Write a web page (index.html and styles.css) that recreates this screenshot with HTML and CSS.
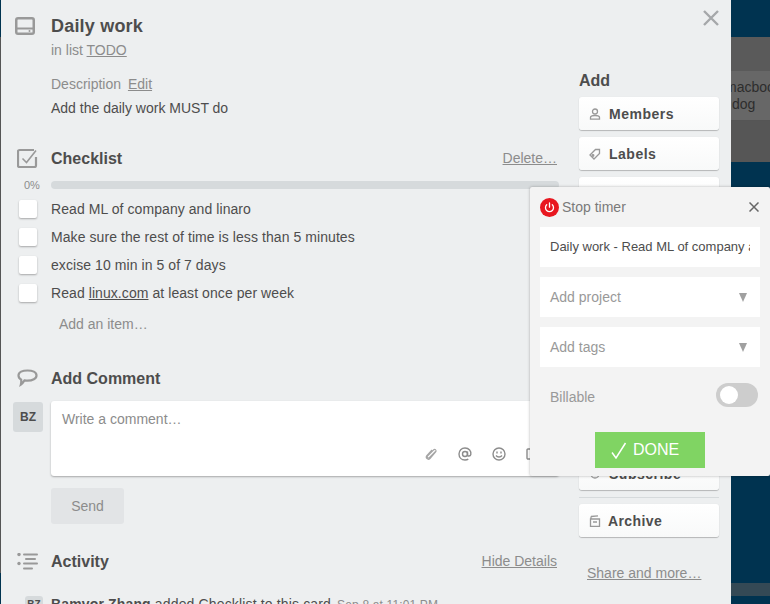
FILE: index.html
```html
<!DOCTYPE html>
<html lang="en">
<head>
  <meta charset="UTF-8" />
  <title>Daily work</title>
  <link rel="stylesheet" href="styles.css">
</head>
<body>
  <div class="page">
    <div class="edge"></div>

    <div class="modal">
      <svg class="close" width="18" height="18" viewBox="0 0 18 18"><path d="M2 2l14 14M16 2L2 16" /></svg>

      <div class="main">
        <div class="head-row">
          <svg class="head-icon title-icon" width="20" height="18" viewBox="0 0 20 18"><path fill="#999" d="M3 0h14a3 3 0 0 1 3 3v12a3 3 0 0 1-3 3H3a3 3 0 0 1-3-3V3a3 3 0 0 1 3-3zm0 2.500a.5.5 0 0 0-.5.500v7.500h15V3a.5.5 0 0 0-.5-.5zM2.500 12.500V15a.5.5 0 0 0 .5.500h14a.5.5 0 0 0 .5-.5v-2.500z"/><circle fill="#999" cx="14.500" cy="14" r="1"/></svg>
          <h1>Daily work</h1>
        </div>
        <div class="body-col">
          <p class="sub">in list <a href="#">TODO</a></p>
          <p class="desc-label">Description <a href="#">Edit</a></p>
          <p class="desc">Add the daily work MUST do</p>
        </div>

        <div class="head-row checklist-head">
          <svg class="head-icon" width="21" height="20" viewBox="0 0 21 20"><path fill="none" stroke="#999" stroke-width="2.200" d="M19 9v8.500a1.500 1.500 0 0 1-1.500 1.500h-15A1.500 1.500 0 0 1 1 17.500v-14A1.500 1.500 0 0 1 2.500 2H17"/><path fill="none" stroke="#999" stroke-width="1.600" d="M5.500 10.500l4 4L19 2.500"/></svg>
          <h2>Checklist</h2>
          <a class="side-link" href="#">Delete…</a>
        </div>
        <div class="progress">
          <span class="percent">0%</span>
          <div class="bar"></div>
        </div>
        <div class="items">
          <div class="item"><span class="box"></span><span>Read ML of company and linaro</span></div>
          <div class="item"><span class="box"></span><span>Make sure the rest of time is less than 5 minutes</span></div>
          <div class="item"><span class="box"></span><span>excise 10 min in 5 of 7 days</span></div>
          <div class="item"><span class="box"></span><span>Read <a href="#">linux.com</a> at least once per week</span></div>
        </div>
        <p class="add-item">Add an item…</p>

        <div class="head-row comment-head">
          <svg class="head-icon" width="21" height="18" viewBox="0 0 21 18"><path fill="none" stroke="#999" stroke-width="2.200" d="M10.500 1.500c5 0 9 1.900 9 5s-4 5.200-9 5.200c-1 0-2-.1-3-.3-.8 1.300-2 3.100-3.600 4.100.4-1.500.5-3 .3-4.800C2.700 9.800 1.500 8.300 1.500 6.500c0-3.100 4-5 9-5z"/></svg>
          <h2>Add Comment</h2>
        </div>
        <div class="comment-row">
          <div class="avatar">BZ</div>
          <div class="comment-box">
            <p class="placeholder">Write a comment…</p>
            <div class="comment-tools">
              <svg class="clip" width="16" height="16" viewBox="0 0 16 16"><path d="M12.500 5.500L6.500 11.500c-1 1-3 .2-2-1.500L10.500 4c1.500-1.500 3.500.5 2.200 2L7 12.500c-2 2-5-.5-3.200-3L9 4"/></svg>
              <svg width="16" height="16" viewBox="0 0 16 16"><circle cx="8" cy="8" r="2.500"/><path d="M10.500 5.500v3.500c0 1.500 2.800 1.500 3.300-.5C14.400 5 12 2 8 2 4.500 2 2 4.500 2 8s2.500 6 6 6c1.400 0 2.400-.3 3.300-.9"/></svg>
              <svg width="16" height="16" viewBox="0 0 16 16"><circle cx="8" cy="8" r="6"/><path d="M5 9.500c1.500 2 4.500 2 6 0"/><path d="M6 5.500v2M10 5.500v2"/></svg>
              <svg width="16" height="16" viewBox="0 0 16 16"><rect x="2" y="3" width="12" height="10" rx="1"/></svg>
            </div>
          </div>
        </div>
        <div class="body-col">
          <button class="send" type="button">Send</button>
        </div>

        <div class="head-row activity-head">
          <svg class="head-icon" width="21" height="17" viewBox="0 0 21 17"><g fill="#999"><circle cx="2" cy="1.500" r="1.700"/><circle cx="2" cy="10.500" r="1.700"/><rect x="6" y=".5" width="15" height="2" rx="1"/><rect x="8" y="5" width="11" height="2" rx="1"/><rect x="6" y="9.500" width="15" height="2" rx="1"/><rect x="6" y="14.500" width="10" height="2" rx="1"/></g></svg>
          <h2>Activity</h2>
          <a class="side-link" href="#">Hide Details</a>
        </div>
        <div class="activity-row">
          <div class="avatar small">BZ</div>
          <p><strong>Bamvor Zhang</strong> added Checklist to this card <span class="date">Sep 8 at 11:01 PM</span></p>
        </div>
      </div>

      <div class="sidebar">
        <h3>Add</h3>
        <div class="btn"><svg width="12" height="12" viewBox="0 0 12 12"><circle cx="6" cy="3.500" r="2.500"/><path d="M1.500 11.200V9.500c0-1.500 2-2 4.500-2s4.500.5 4.500 2v1.700z"/></svg>Members</div>
        <div class="btn"><svg width="12" height="12" viewBox="0 0 12 12"><path d="M1 7l5.500-5.500h4v4L5 11z"/><circle cx="4" cy="7.500" r=".8"/></svg>Labels</div>
        <div class="btn">Checklist</div>
        <div class="btn">Due Date</div>
        <div class="btn">Attachment</div>
        <h3 class="actions">Actions</h3>
        <div class="btn">Move</div>
        <div class="btn">Copy</div>
        <div class="btn"><svg width="12" height="12" viewBox="0 0 12 12"><circle cx="6" cy="6" r="4"/></svg>Subscribe</div>
        <hr />
        <div class="btn archive"><svg width="12" height="12" viewBox="0 0 12 12"><path d="M2 1.500L9 .8M2 1.500V4M1.500 4h9v7.500h-9zM4 7h4"/></svg>Archive</div>
        <a class="share" href="#">Share and more…</a>
      </div>
    </div>

    <div class="board">
      <div class="board-top"></div>
      <div class="list-head"></div>
      <div class="list-card">
        <span class="line-one">macbook</span>
        <span>dog</span>
      </div>
      <div class="list-foot"></div>
      <div class="board-gap"></div>
      <div class="scroll"></div>
    </div>

    <div class="timer">
      <div class="timer-head">
        <svg class="power" width="19" height="19" viewBox="0 0 19 19"><circle cx="9.500" cy="9.500" r="9.500" fill="#e8171f"/><path fill="none" stroke="#fff" stroke-width="1.300" stroke-linecap="round" d="M6.700 6.800a4 4 0 1 0 5.600 0M9.500 5v4.200"/></svg>
        <span class="timer-title">Stop timer</span>
        <svg class="timer-close" width="10" height="10" viewBox="0 0 10 10"><path d="M.5.5l9 9M9.500.5l-9 9"/></svg>
      </div>
      <div class="field task"><span>Daily work - Read ML of company and linaro</span></div>
      <div class="field"><span>Add project</span><i class="arrow"></i></div>
      <div class="field"><span>Add tags</span><i class="arrow"></i></div>
      <div class="billable">
        <span>Billable</span>
        <div class="toggle"><div class="knob"></div></div>
      </div>
      <div class="done">
        <svg class="tick" width="16" height="17" viewBox="0 0 16 17"><path d="M1 10.500l4 5.500L14.500 1"/></svg>
        DONE
      </div>
    </div>
  </div>
</body>
</html>
```

FILE: styles.css
```css
body {
  margin: 0;
  font-family: "Liberation Sans", Arial, sans-serif;
  font-size: 14px;
  line-height: 20px;
  color: #4d4d4d;
}
p, h1, h2, h3 {
  margin: 0;
}
a {
  color: inherit;
}
.page {
  position: relative;
  display: flex;
  width: 770px;
  height: 604px;
  overflow: hidden;
  background-color: #003350;
}
.edge {
  width: 1px;
  background: linear-gradient(#003350 37px, #555 37px, #555 573px, #003350 573px);
}

/* card modal */
.modal {
  position: relative;
  display: flex;
  gap: 20px;
  width: 718px;
  height: 590px;
  padding: 14px 12px 0 0;
  background-color: #edeff0;
  overflow: hidden;
}
.close {
  position: absolute;
  top: 9px;
  right: 11px;
  fill: none;
  stroke: #a5a8aa;
  stroke-width: 2.400;
}
.main {
  width: 558px;
  flex-shrink: 0;
  padding-left: 13px;
  box-sizing: border-box;
}
.head-row {
  display: flex;
  align-items: center;
  height: 24px;
}
.head-icon {
  flex-shrink: 0;
  margin: 0 13px 0 3px;
}
.title-icon {
  margin: 0 16px 0 1px;
}
.head-row h1, .head-row h2 {
  flex: 1;
}
h1 {
  font-size: 18px;
  line-height: 24px;
  letter-spacing: .2px;
}
h2 {
  margin-top: 2px;
  font-size: 16px;
  line-height: 24px;
}
.body-col {
  padding-left: 37px;
}
.sub {
  margin-top: 2px;
  color: #8c8c8c;
}
.desc-label {
  margin-top: 14px;
  color: #8c8c8c;
}
.desc-label a {
  margin-left: 3px;
}
.desc {
  margin-top: 4px;
}
.checklist-head {
  margin-top: 28px;
}
.side-link {
  margin-right: 2px;
  color: #8c8c8c;
}
.progress {
  display: flex;
  align-items: center;
  margin-top: 11px;
  height: 8px;
}
.percent {
  width: 37px;
  padding-left: 10px;
  box-sizing: border-box;
  font-size: 11px;
  color: #8c8c8c;
}
.bar {
  flex: 1;
  height: 8px;
  border-radius: 4px;
  background-color: #d6dadc;
}
.items {
  margin-top: 6px;
}
.item {
  display: flex;
  align-items: center;
  height: 28px;
  letter-spacing: .07px;
}
.box {
  width: 18px;
  height: 18px;
  margin: 0 14px 0 5px;
  border-radius: 2px;
  background-color: #fff;
  box-shadow: 0 1px 2px rgba(0, 0, 0, .3);
}
.add-item {
  margin-top: 7px;
  padding-left: 45px;
  color: #8c8c8c;
}
.comment-head {
  margin-top: 32px;
}
.comment-row {
  display: flex;
  margin-top: 11px;
  margin-left: -1px;
}
.avatar {
  flex-shrink: 0;
  width: 30px;
  height: 30px;
  margin: 1px 8px 0 0;
  border-radius: 3px;
  background-color: #d6dadc;
  font-size: 12px;
  font-weight: bold;
  line-height: 30px;
  text-align: center;
}
.comment-box {
  display: flex;
  flex-direction: column;
  justify-content: space-between;
  flex: 1;
  height: 75px;
  padding: 8px 0 14px 11px;
  box-sizing: border-box;
  border-radius: 3px;
  background-color: #fff;
  box-shadow: 0 1px 2px rgba(0, 0, 0, .3);
}
.placeholder {
  color: #8c8c8c;
}
.comment-tools {
  display: flex;
  justify-content: flex-end;
  gap: 18px;
  margin-right: 18px;
}
.comment-tools svg {
  fill: none;
  stroke: #8c8c8c;
  stroke-width: 1.400;
}
.comment-tools .clip {
  stroke: #a5a5a5;
  stroke-width: 1.100;
}
.send {
  display: block;
  width: 73px;
  height: 36px;
  margin-top: 12px;
  border: 0;
  border-radius: 3px;
  background-color: #e2e4e6;
  color: #8c8c8c;
  font: inherit;
}
.activity-head {
  margin-top: 25px;
}
.activity-row {
  display: flex;
  margin-top: 21px;
  padding-left: 11px;
  letter-spacing: .15px;
}
.avatar.small {
  width: 18px;
  height: 18px;
  margin: 2px 8px 0 0;
  font-size: 10px;
  line-height: 18px;
}
.date {
  margin-left: 2px;
  font-size: 12px;
  color: #8c8c8c;
}

/* right hand buttons */
.sidebar {
  width: 140px;
  flex-shrink: 0;
  padding-top: 55px;
}
h3 {
  font-size: 16px;
  line-height: 24px;
}
.sidebar h3 {
  margin-bottom: 4px;
}
.sidebar .actions {
  margin: 59px 0 4px;
}
.btn {
  display: flex;
  align-items: center;
  gap: 8px;
  height: 33px;
  margin-bottom: 7px;
  padding-left: 10px;
  box-sizing: border-box;
  border-radius: 3px;
  background: linear-gradient(#fff, #f8f9f9);
  box-shadow: 0 1px 1px rgba(0, 0, 0, .23), 0 0 1px rgba(0, 0, 0, .1);
  font-weight: bold;
  font-size: 14px;
  letter-spacing: .5px;
}
.btn svg {
  flex-shrink: 0;
  fill: none;
  stroke: #999;
  stroke-width: 1.300;
}
.sidebar hr {
  height: 1px;
  margin: 0 0 6px;
  border: 0;
  background-color: #d6dadc;
}
.archive {
  gap: 7px;
  letter-spacing: .4px;
  margin-bottom: 26px;
}
.share {
  margin-left: 8px;
  color: #8c8c8c;
}

/* board behind the modal */
.board {
  flex: 1;
  display: flex;
  flex-direction: column;
  min-width: 0;
  overflow: hidden;
}
.board-top {
  height: 37px;
}
.list-head {
  height: 34px;
  background-color: #5a5a5a;
}
.list-card {
  display: flex;
  flex-direction: column;
  height: 50px;
  padding: 8px 0 0 1px;
  box-sizing: border-box;
  background-color: #676767;
  border-bottom: 1px solid #555;
  font-size: 14px;
  line-height: 17px;
  color: #2d2d2d;
  white-space: nowrap;
}
.line-one {
  margin-left: -7px;
}
.list-foot {
  height: 41px;
  background-color: #565656;
}
.board-gap {
  height: 421px;
}
.scroll {
  height: 13px;
  background-color: #344955;
}

/* toggl popup */
.timer {
  position: absolute;
  top: 187px;
  left: 530px;
  width: 240px;
  height: 289px;
  padding: 0 10px;
  box-sizing: border-box;
  border-radius: 2px;
  background-color: #f3f3f3;
  box-shadow: 0 0 3px rgba(0, 0, 0, .3);
}
.timer-head {
  display: flex;
  align-items: center;
  height: 40px;
}
.power {
  flex-shrink: 0;
  margin-right: 3px;
}
.timer-title {
  flex: 1;
  color: #7a7a7a;
}
.timer-close {
  margin-right: 1px;
  fill: none;
  stroke: #666;
  stroke-width: 1.500;
}
.field {
  display: flex;
  align-items: center;
  justify-content: space-between;
  height: 40px;
  margin-bottom: 10px;
  padding: 0 10px;
  box-sizing: border-box;
  background-color: #fff;
  color: #999;
}
.field.task {
  color: #4d4d4d;
  font-size: 13px;
  white-space: nowrap;
  overflow: hidden;
}
.field.task span {
  overflow: hidden;
}
.arrow {
  width: 0;
  height: 0;
  border-left: 4.500px solid transparent;
  border-right: 4.500px solid transparent;
  border-top: 9px solid #a0a0a0;
  margin-right: 3px;
}
.billable {
  display: flex;
  align-items: center;
  justify-content: space-between;
  height: 24px;
  margin: 16px 2px 0 10px;
  color: #999;
}
.billable span {
  padding-top: 4px;
}
.toggle {
  width: 42px;
  height: 24px;
  border-radius: 12px;
  background-color: #cdcdcd;
}
.knob {
  width: 18px;
  height: 18px;
  margin: 3px 0 0 4px;
  border-radius: 50%;
  background-color: #fff;
}
.done {
  display: flex;
  align-items: center;
  width: 110px;
  height: 36px;
  margin: 25px 0 0 55px;
  padding-left: 16px;
  box-sizing: border-box;
  background-color: #80d463;
  color: #fff;
  font-size: 16px;
}
.tick {
  margin-right: 6px;
  fill: none;
  stroke: #fff;
  stroke-width: 1.500;
}
```
